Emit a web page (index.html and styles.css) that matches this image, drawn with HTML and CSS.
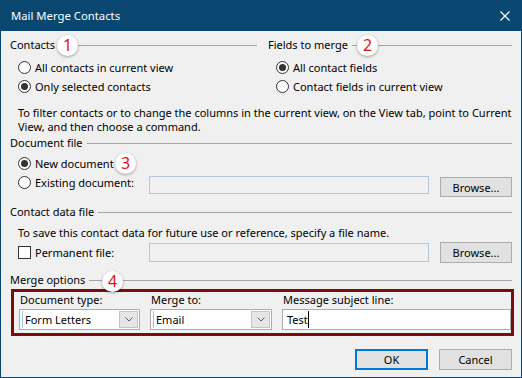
FILE: index.html
```html
<!DOCTYPE html>
<html lang="en">
<head>
  <meta charset="UTF-8" />
  <title>Mail Merge Contacts</title>
  <link rel="stylesheet" href="styles.css">
</head>
<body>
  <div class="window">
    <div class="titlebar">
      <span class="title">Mail Merge Contacts</span>
      <svg class="close" width="10" height="10" viewBox="0 0 10 10">
        <path d="M0.5 0.5 L9.5 9.5 M9.5 0.5 L0.5 9.5" stroke="#fff" stroke-width="1.2" fill="none"/>
      </svg>
    </div>

    <div class="content">
      <div class="top-groups">
        <div class="group">
          <div class="heading">Contacts<span class="rule"></span>
            <span class="badge badge-1">1</span>
          </div>
          <div class="options">
            <label class="radio-row"><span class="radio"></span>All contacts in current view</label>
            <label class="radio-row"><span class="radio checked"></span>Only selected contacts</label>
          </div>
        </div>
        <div class="group">
          <div class="heading">Fields to merge<span class="rule"></span>
            <span class="badge badge-2">2</span>
          </div>
          <div class="options">
            <label class="radio-row"><span class="radio checked"></span>All contact fields</label>
            <label class="radio-row"><span class="radio"></span>Contact fields in current view</label>
          </div>
        </div>
      </div>

      <p class="info">To filter contacts or to change the columns in the current view, on the View tab, point to Current<br>View, and then choose a command.</p>

      <div class="heading section">Document file<span class="rule"></span></div>
      <div class="options">
        <div class="radio-row new-doc"><span class="radio checked"></span>New document
          <span class="badge badge-3">3</span>
        </div>
        <div class="file-row">
          <label class="radio-row file-label"><span class="radio"></span>Existing document:</label>
          <div class="field disabled"></div>
          <button class="btn browse">Browse...</button>
        </div>
      </div>

      <div class="heading section data-file">Contact data file<span class="rule"></span></div>
      <p class="info save-note">To save this contact data for future use or reference, specify a file name.</p>
      <div class="file-row permanent">
        <label class="radio-row file-label"><span class="check"></span>Permanent file:</label>
        <div class="field disabled"></div>
        <button class="btn browse">Browse...</button>
      </div>

      <div class="heading section merge">Merge options<span class="rule"></span>
        <span class="badge badge-4">4</span>
      </div>
      <div class="merge-box">
        <div class="merge-col">
          <div class="merge-label">Document type:</div>
          <div class="combo"><span class="combo-text">Form Letters</span><span class="combo-btn"><svg width="8" height="5" viewBox="0 0 8 5"><path d="M0.5 0.5 L4 4 L7.5 0.5" stroke="#606060" fill="none"/></svg></span></div>
        </div>
        <div class="merge-col">
          <div class="merge-label">Merge to:</div>
          <div class="combo"><span class="combo-text">Email</span><span class="combo-btn"><svg width="8" height="5" viewBox="0 0 8 5"><path d="M0.5 0.5 L4 4 L7.5 0.5" stroke="#606060" fill="none"/></svg></span></div>
        </div>
        <div class="merge-col">
          <div class="merge-label">Message subject line:</div>
          <div class="field subject"><span class="caret-text">Test</span></div>
        </div>
      </div>

      <div class="actions">
        <button class="btn ok">OK</button>
        <button class="btn">Cancel</button>
      </div>
    </div>
  </div>
</body>
</html>
```

FILE: styles.css
```css
body {
  margin: 0;
  font-family: 'Noto Sans', 'Open Sans', sans-serif;
  font-size: 11px;
  color: #000;
  background: #f0f0f0;
}

.window {
  width: 522px;
  height: 378px;
  box-sizing: border-box;
  border: 1px solid #0a4770;
  border-top: none;
  background: #f0f0f0;
  overflow: hidden;
}

.titlebar {
  height: 31px;
  margin: 0 -1px;
  background: #0a4770;
  display: flex;
  align-items: center;
  justify-content: space-between;
  padding: 0 12px 0 11px;
}

.title {
  color: #fff;
  font-size: 11.3px;
  line-height: 14px;
}

.content {
  padding: 7px 9px 0 9px;
}

.top-groups {
  display: grid;
  grid-template-columns: 247px 1fr;
  column-gap: 11px;
}

.heading {
  position: relative;
  display: flex;
  align-items: center;
  height: 14px;
  line-height: 14px;
  white-space: nowrap;
}

.rule {
  flex: 1;
  height: 1px;
  margin-left: 4px;
  background: #a6a6a6;
}

.badge {
  position: absolute;
  width: 21px;
  height: 21px;
  border-radius: 50%;
  background: #fff;
  box-shadow: 0 1px 3px rgba(0, 0, 0, 0.35);
  color: #e50f0f;
  font-size: 16px;
  line-height: 21px;
  text-align: center;
}

.badge-1 { left: 47px; top: -3px; }
.badge-2 { left: 89px; top: -3px; }
.badge-3 { left: 97px; top: -1px; }
.badge-4 { left: 92px; top: -2px; }

.options {
  margin-top: 6px;
  padding-left: 8px;
}

.radio-row {
  position: relative;
  display: flex;
  align-items: center;
  height: 19px;
  white-space: nowrap;
}

.radio {
  width: 11px;
  height: 11px;
  border: 1px solid #333;
  border-radius: 50%;
  background: #fff;
  margin-right: 4px;
  position: relative;
  flex: none;
}

.radio.checked::after {
  content: "";
  position: absolute;
  left: 2px;
  top: 2px;
  width: 7px;
  height: 7px;
  border-radius: 50%;
  background: #333;
}

.check {
  width: 11px;
  height: 11px;
  border: 1px solid #333;
  background: #fff;
  margin-right: 4px;
  flex: none;
}

.info {
  margin: 10px 0 0 8px;
  line-height: 14px;
  white-space: nowrap;
}

.section {
  margin-top: 2px;
}

.heading.section + .options {
  margin-top: 4px;
}

.file-row {
  display: flex;
  align-items: flex-start;
}

.options .file-row {
  margin-left: -8px;
  padding-left: 8px;
}

.file-label {
  width: 131px;
  flex: none;
}

.field {
  flex: 1;
  height: 18px;
  margin-top: 3px;
  box-sizing: border-box;
  border: 1px solid #b4c6d8;
  background: #f0f0f0;
}

.btn {
  font-family: inherit;
  font-size: 11px;
  color: #000;
  width: 72px;
  height: 20px;
  padding: 0;
  margin-left: 11px;
  margin-top: 4px;
  box-sizing: border-box;
  border: 1px solid #adadad;
  background: #e1e1e1;
  flex: none;
}

.data-file {
  margin-top: 8px;
}

.save-note {
  margin-top: 7px;
}

.permanent {
  margin-top: 2px;
  padding-left: 8px;
  align-items: center;
  height: 21px;
}

.permanent .field {
  margin-top: 0;
  height: 19px;
}

.permanent .btn {
  margin-top: 0;
  height: 21px;
}

.merge {
  margin-top: 10px;
}

.merge-box {
  margin: 2px -2px 0 1px;
  border: 3px solid #7b0c0c;
  display: grid;
  grid-template-columns: 121px 122px 1fr;
  column-gap: 10px;
  padding: 1px 0 1px 5px;
  height: 39px;
}

.merge-label {
  line-height: 14px;
  padding-left: 1px;
  white-space: nowrap;
}

.combo {
  margin-top: 2px;
  height: 21px;
  box-sizing: border-box;
  border: 1px solid #acacac;
  background: #fff;
  display: flex;
  align-items: stretch;
}

.combo-text {
  flex: 1;
  padding-left: 2px;
  border-left: 1px solid #9cc3e8;
  margin: 1px 0 1px 2px;
  line-height: 17px;
}

.combo-btn {
  width: 17px;
  margin: 1px;
  border: 1px solid #c4c4c4;
  background: #e6e6e6;
  display: flex;
  align-items: center;
  justify-content: center;
}

.field.subject {
  margin-top: 2px;
  height: 21px;
  background: #fff;
  border-color: #acacac;
  display: flex;
}

.caret-text {
  flex: none;
  padding-left: 4px;
  border-right: 1px solid #000;
  margin: 1px 0;
  line-height: 17px;
}

.actions {
  display: flex;
  justify-content: flex-end;
  margin-top: 13px;
}

.actions .btn {
  margin-top: 0;
  width: 73px;
  height: 21px;
}

.btn.ok {
  border: 2px solid #0078d7;
}
```
